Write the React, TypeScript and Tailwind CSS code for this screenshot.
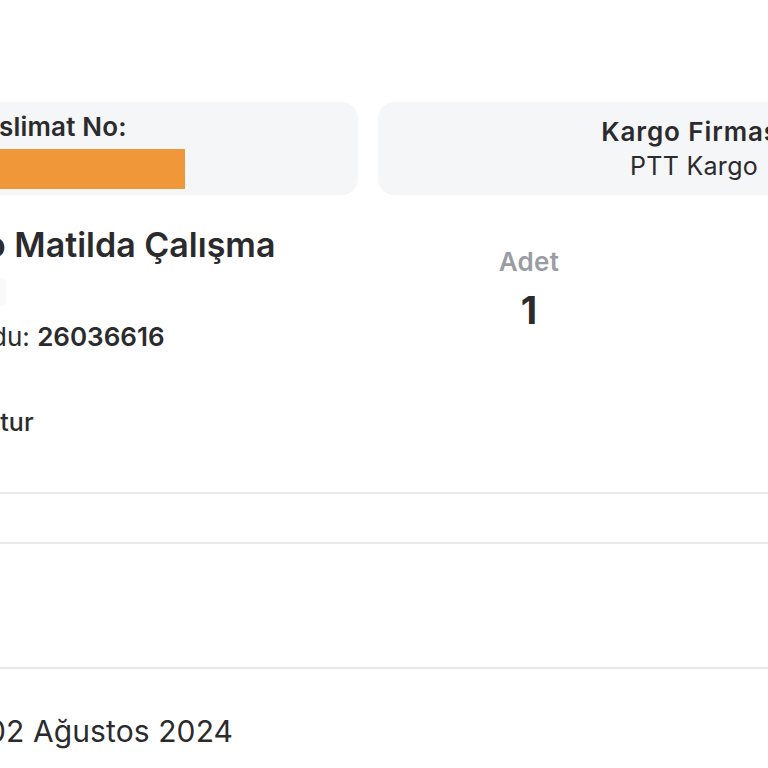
import React from "react";

export default function App() {
  return (
    <div
      className="w-[768px] h-[768px] overflow-hidden bg-white text-[#2b2b2d]"
      style={{ fontFamily: "Inter, 'Noto Sans', sans-serif" }}
    >
      <div className="ml-[-50px] w-[1100px] pt-[102px]">
        {/* Top cards */}
        <div className="flex gap-5">
          <div className="w-[408px] h-[93px] rounded-[16px] bg-[#f5f6f8] pl-[18px] pt-[9px]">
            <div className="text-[26px] font-semibold leading-[32px] tracking-[0.2px] whitespace-nowrap">Teslimat No:</div>
            <div className="mt-[6px] h-[40px] w-[217px] bg-[#f0973a]" />
          </div>
          <div className="w-[632px] h-[93px] rounded-[16px] bg-[#f5f6f8] flex flex-col items-center justify-center">
            <div className="text-[26px] font-semibold leading-[34px] tracking-[0.9px] whitespace-nowrap">Kargo Firması</div>
            <div className="text-[25px] font-normal leading-[34px] tracking-[0.3px] whitespace-nowrap">PTT Kargo</div>
          </div>
        </div>

        {/* Product */}
        <div className="mt-5 h-[279px] flex border-b-2 border-[#e9e9eb]">
          <div className="w-[520px] pl-5 pt-[10px]">
            <div className="-ml-[22px] text-[34px] font-semibold leading-[40px] whitespace-nowrap">Lilo Matilda Çalışma</div>
            <div className="mt-[13px] h-[28px] w-[36px] rounded-r-[4px] bg-[#f9f9fa]" />
            <div className="-ml-[11px] mt-[14px] text-[26px] leading-[34px] whitespace-nowrap">
              Kodu: <span className="font-semibold">26036616</span>
            </div>
            <div className="mt-[52px] text-[25px] font-medium leading-[32px] whitespace-nowrap">Satur</div>
          </div>
          <div className="w-[118px] pt-[31px] flex flex-col items-center">
            <div className="text-[26px] font-semibold leading-[32px] tracking-[0.3px] text-[#9a9ca3]">Adet</div>
            <div className="mt-[12px] text-[38px] font-bold leading-[40px]">1</div>
          </div>
        </div>

        <div className="h-[50px] border-b-2 border-[#e9e9eb]" />
        <div className="h-[125px] border-b-2 border-[#e9e9eb]" />

        <div className="pl-[37px] pt-[42px] text-[30px] font-normal leading-[40px] tracking-[0.1px] whitespace-nowrap">
          02 Ağustos 2024
        </div>
      </div>
    </div>
  );
}
